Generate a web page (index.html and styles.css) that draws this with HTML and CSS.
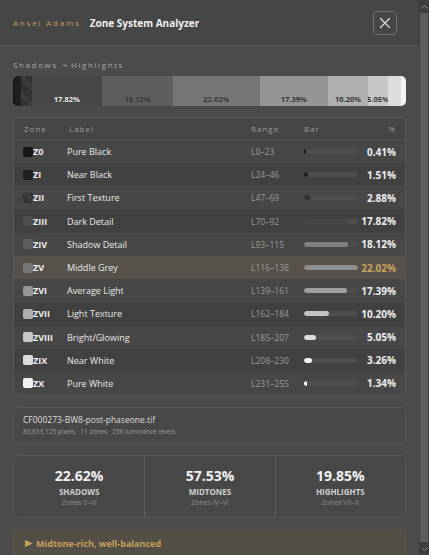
FILE: index.html
```html
<!DOCTYPE html>
<html lang="en">

<head>
    <meta charset="UTF-8">
    <meta name="viewport" content="width=device-width, initial-scale=1.0">
    <title>Zone System Analyzer</title>
    <link rel="stylesheet" href="styles.css">
</head>

<body>
    <div class="frame">
        <div class="modal">
            <header class="modal-head">
                <span class="brand">Ansel Adams</span>
                <span class="title">Zone System Analyzer</span>
                <button class="close" aria-label="Close">
                    <svg width="12" height="12" viewBox="0 0 12 12">
                        <path d="M1.5 1.5L10.5 10.5M10.5 1.5L1.5 10.5" stroke="#ddd" stroke-width="1.2" stroke-linecap="round" />
                    </svg>
                </button>
            </header>

            <div class="modal-body">
                <div class="section-label">Shadows <span class="arrow">→</span> Highlights</div>
                <div class="tonal">
                    <div class="seg z0" style="width:0.41%"></div>
                    <div class="seg z1" style="width:1.51%"></div>
                    <div class="seg z2" style="width:2.88%"></div>
                    <div class="seg z3" style="width:17.82%"><span>17.82%</span></div>
                    <div class="seg z4" style="width:18.12%"><span>18.12%</span></div>
                    <div class="seg z5" style="width:22.02%"><span>22.02%</span></div>
                    <div class="seg z6" style="width:17.39%"><span>17.39%</span></div>
                    <div class="seg z7" style="width:10.20%"><span>10.20%</span></div>
                    <div class="seg z8" style="width:5.05%"><span>5.05%</span></div>
                    <div class="seg z9" style="width:3.26%"></div>
                    <div class="seg z10" style="width:1.34%"></div>
                </div>

                <div class="table">
                    <div class="row head">
                        <span>Zone</span>
                        <span>Label</span>
                        <span>Range</span>
                        <span>Bar</span>
                        <span class="pct">%</span>
                    </div>
                    <div class="row">
                        <span class="zone"><i class="sw z0"></i>Z0</span>
                        <span class="label">Pure Black</span>
                        <span class="range">L0–23</span>
                        <span class="track"><b class="z0" style="width:1.9%"></b></span>
                        <span class="pct">0.41%</span>
                    </div>
                    <div class="row">
                        <span class="zone"><i class="sw z1"></i>ZI</span>
                        <span class="label">Near Black</span>
                        <span class="range">L24–46</span>
                        <span class="track"><b class="z1" style="width:6.9%"></b></span>
                        <span class="pct">1.51%</span>
                    </div>
                    <div class="row">
                        <span class="zone"><i class="sw z2"></i>ZII</span>
                        <span class="label">First Texture</span>
                        <span class="range">L47–69</span>
                        <span class="track"><b class="z2" style="width:13.1%"></b></span>
                        <span class="pct">2.88%</span>
                    </div>
                    <div class="row">
                        <span class="zone"><i class="sw z3"></i>ZIII</span>
                        <span class="label">Dark Detail</span>
                        <span class="range">L70–92</span>
                        <span class="track"><b class="z3" style="width:80.9%"></b></span>
                        <span class="pct">17.82%</span>
                    </div>
                    <div class="row">
                        <span class="zone"><i class="sw z4"></i>ZIV</span>
                        <span class="label">Shadow Detail</span>
                        <span class="range">L93–115</span>
                        <span class="track"><b class="z4" style="width:82.3%"></b></span>
                        <span class="pct">18.12%</span>
                    </div>
                    <div class="row peak">
                        <span class="zone"><i class="sw z5"></i>ZV</span>
                        <span class="label">Middle Grey</span>
                        <span class="range">L116–138</span>
                        <span class="track"><b class="z5" style="width:100%"></b></span>
                        <span class="pct">22.02%</span>
                    </div>
                    <div class="row">
                        <span class="zone"><i class="sw z6"></i>ZVI</span>
                        <span class="label">Average Light</span>
                        <span class="range">L139–161</span>
                        <span class="track"><b class="z6" style="width:79%"></b></span>
                        <span class="pct">17.39%</span>
                    </div>
                    <div class="row">
                        <span class="zone"><i class="sw z7"></i>ZVII</span>
                        <span class="label">Light Texture</span>
                        <span class="range">L162–184</span>
                        <span class="track"><b class="z7" style="width:46.3%"></b></span>
                        <span class="pct">10.20%</span>
                    </div>
                    <div class="row">
                        <span class="zone"><i class="sw z8"></i>ZVIII</span>
                        <span class="label">Bright/Glowing</span>
                        <span class="range">L185–207</span>
                        <span class="track"><b class="z8" style="width:22.9%"></b></span>
                        <span class="pct">5.05%</span>
                    </div>
                    <div class="row">
                        <span class="zone"><i class="sw z9"></i>ZIX</span>
                        <span class="label">Near White</span>
                        <span class="range">L208–230</span>
                        <span class="track"><b class="z9" style="width:14.8%"></b></span>
                        <span class="pct">3.26%</span>
                    </div>
                    <div class="row">
                        <span class="zone"><i class="sw z10"></i>ZX</span>
                        <span class="label">Pure White</span>
                        <span class="range">L231–255</span>
                        <span class="track"><b class="z10" style="width:6.1%"></b></span>
                        <span class="pct">1.34%</span>
                    </div>
                </div>

                <div class="card file">
                    <div class="file-name">CF000273-BW8-post-phaseone.tif</div>
                    <div class="file-meta">80,633,125 pixels · 11 zones · 256 luminance levels</div>
                </div>

                <div class="card stats">
                    <div class="stat">
                        <div class="stat-val">22.62%</div>
                        <div class="stat-name">SHADOWS</div>
                        <div class="stat-sub">Zones 0–III</div>
                    </div>
                    <div class="stat">
                        <div class="stat-val">57.53%</div>
                        <div class="stat-name">MIDTONES</div>
                        <div class="stat-sub">Zones IV–VI</div>
                    </div>
                    <div class="stat">
                        <div class="stat-val">19.85%</div>
                        <div class="stat-name">HIGHLIGHTS</div>
                        <div class="stat-sub">Zones VII–X</div>
                    </div>
                </div>

                <div class="card verdict">
                    <div class="verdict-title">
                        <svg class="tri" width="8" height="7" viewBox="0 0 8 7"><path d="M0 0L8 3.5L0 7Z" fill="#c8a05a" /></svg>
                        Midtone-rich, well-balanced
                    </div>
                </div>
            </div>
        </div>

        <!-- scrollbar -->
        <div class="scrollbar">
            <span class="sb-btn">
                <svg width="7" height="4" viewBox="0 0 7 4"><path d="M0.5 3.5L3.5 0.5L6.5 3.5" fill="none" stroke="#8a8a8a" stroke-width="1" /></svg>
            </span>
            <span class="sb-thumb"></span>
            <span class="sb-btn">
                <svg width="7" height="4" viewBox="0 0 7 4"><path d="M0.5 0.5L3.5 3.5L6.5 0.5" fill="none" stroke="#8a8a8a" stroke-width="1" /></svg>
            </span>
        </div>
    </div>
</body>

</html>
```

FILE: styles.css
```css
html,
body {
    margin: 0;
    padding: 0;
    height: 100%;
}

body {
    font-family: "Open Sans", "Liberation Sans", sans-serif;
    background-color: #3b3b3b;
    color: #e6e6e6;
    overflow: hidden;
}

.frame {
    height: 100vh;
    display: flex;
}

.modal {
    flex: 1;
    min-width: 0;
    overflow: hidden;
    background-color: #4b4b4b;
}

/* fake scrollbar */
.scrollbar {
    width: 10px;
    display: flex;
    flex-direction: column;
    align-items: center;
    background-color: #3d3d3d;
}

.sb-btn {
    height: 13px;
    display: grid;
    place-items: center;
}

.sb-thumb {
    flex: 1;
    width: 8px;
    background-color: #5d5d5d;
}

.modal-head {
    height: 45px;
    display: flex;
    align-items: center;
    padding: 0 22px 0 13px;
    background-color: #464646;
    border-bottom: 1px solid #565656;
}

.brand {
    font-size: 8px;
    letter-spacing: 1.8px;
    color: #c49b55;
    margin-right: 9px;
}

.title {
    font-size: 10px;
    font-weight: 700;
    color: #f0f0f0;
}

.close {
    margin-left: auto;
    width: 24px;
    height: 24px;
    display: grid;
    place-items: center;
    padding: 0;
    background: transparent;
    border: 1px solid #6e6e6e;
    border-radius: 4px;
}

.modal-body {
    padding: 13px;
    display: flex;
    flex-direction: column;
    gap: 11px;
}

.section-label {
    font-size: 8px;
    letter-spacing: 1.6px;
    color: #a8a8a8;
    margin-bottom: -5px;
}

.arrow {
    font-family: "DejaVu Sans", sans-serif;
    font-size: 7px;
    letter-spacing: 0;
}

/* tonal strip */
.tonal {
    height: 30px;
    display: flex;
    border-radius: 5px;
    overflow: hidden;
    box-shadow: inset 0 0 0 1px rgba(0, 0, 0, 0.15);
}

.seg {
    display: flex;
    align-items: flex-end;
    justify-content: center;
    overflow: hidden;
}

.seg span {
    font-size: 7.5px;
    font-weight: 700;
    color: #363636;
    padding-bottom: 2px;
    white-space: nowrap;
}

.seg.z3 span {
    color: #e6e6e6;
}

.z0 { background-color: #161616; }
.z1 { background-color: #202020; }
.z2 { background: repeating-linear-gradient(45deg, #2a2a2a 0 1px, #444 1px 2px); }
.z3 { background-color: #474747; }
.z4 { background-color: #5e5e5e; }
.z5 { background-color: #767676; }
.z6 { background-color: #959595; }
.z7 { background-color: #afafaf; }
.z8 { background-color: #c7c7c7; }
.z9 { background-color: #dcdcdc; }
.z10 { background-color: #f2f2f2; }

/* zone table */
.table {
    border: 1px solid #575757;
    border-radius: 6px;
    background-color: #464646;
    overflow: hidden;
}

.row {
    display: grid;
    grid-template-columns: 44px 184px 53px 54px 1fr;
    align-items: center;
    height: 23.2px;
    padding: 0 9px;
    background-color: #474747;
}

.row:nth-child(odd) {
    background-color: #414141;
}

.row.head {
    height: 21px;
    background-color: #464646;
    border-bottom: 1px solid #555;
    font-size: 8px;
    letter-spacing: 1px;
    color: #9c9c9c;
}

.row.head span:first-child {
    padding-left: 1px;
}

.row.head span:nth-child(2) {
    padding-left: 2px;
}

.row.peak {
    background-color: #56524b;
}

.zone {
    display: flex;
    align-items: center;
    font-size: 9px;
    font-weight: 700;
    color: #eee;
}

.sw {
    width: 10px;
    height: 10px;
    border-radius: 2px;
}

.sw.z3 {
    background-color: #505050;
}

.label {
    font-size: 9px;
    color: #e8e8e8;
}

.range {
    font-size: 8.5px;
    color: #9a9a9a;
}

.track {
    height: 5px;
    border-radius: 3px;
    background-color: #4f4f4f;
    display: flex;
    overflow: hidden;
}

.track b {
    display: block;
    height: 100%;
    min-width: 2px;
    border-radius: 3px;
}

.track .z4 { background-color: #808080; }
.track .z5 { background-color: #8e8e8e; }
.track .z6 { background-color: #a0a0a0; }
.track .z7 { background-color: #c2c2c2; }
.track .z8 { background-color: #dedede; }
.track .z9 { background-color: #f0f0f0; }
.track .z10 { background-color: #fafafa; }

.pct {
    text-align: right;
    font-size: 10px;
    font-weight: 700;
    color: #eee;
}

.row.head .pct {
    font-size: 8px;
    font-weight: 400;
    color: #9c9c9c;
}

.row.peak .pct {
    color: #c8a25e;
}

/* cards */
.card {
    border: 1px solid #575757;
    border-radius: 6px;
    background-color: #484848;
}

.file {
    padding: 6px 9px 7px;
}

.file-name {
    font-size: 8.5px;
    color: #dedede;
}

.file-meta {
    font-size: 6.5px;
    color: #9a9a9a;
    margin-top: 2px;
}

.stats {
    display: grid;
    grid-template-columns: 1fr 1fr 1fr;
    height: 61px;
}

.stat {
    display: flex;
    flex-direction: column;
    align-items: center;
    justify-content: center;
}

.stat+.stat {
    border-left: 1px solid #5e5e5e;
}

.stat-val {
    font-size: 14px;
    font-weight: 700;
    color: #f0f0f0;
    line-height: 18px;
}

.stat-name {
    font-size: 8px;
    font-weight: 700;
    color: #cfcfcf;
    margin-top: 1px;
}

.stat-sub {
    font-size: 7px;
    color: #8e8e8e;
    margin-top: 1px;
}

.verdict {
    background-color: #534e46;
    border-color: #5e584e;
    padding: 7px 11px;
    height: 16px;
}

.verdict-title {
    display: flex;
    align-items: center;
    gap: 3px;
    font-size: 9px;
    font-weight: 700;
    color: #c8a05a;
}
```
